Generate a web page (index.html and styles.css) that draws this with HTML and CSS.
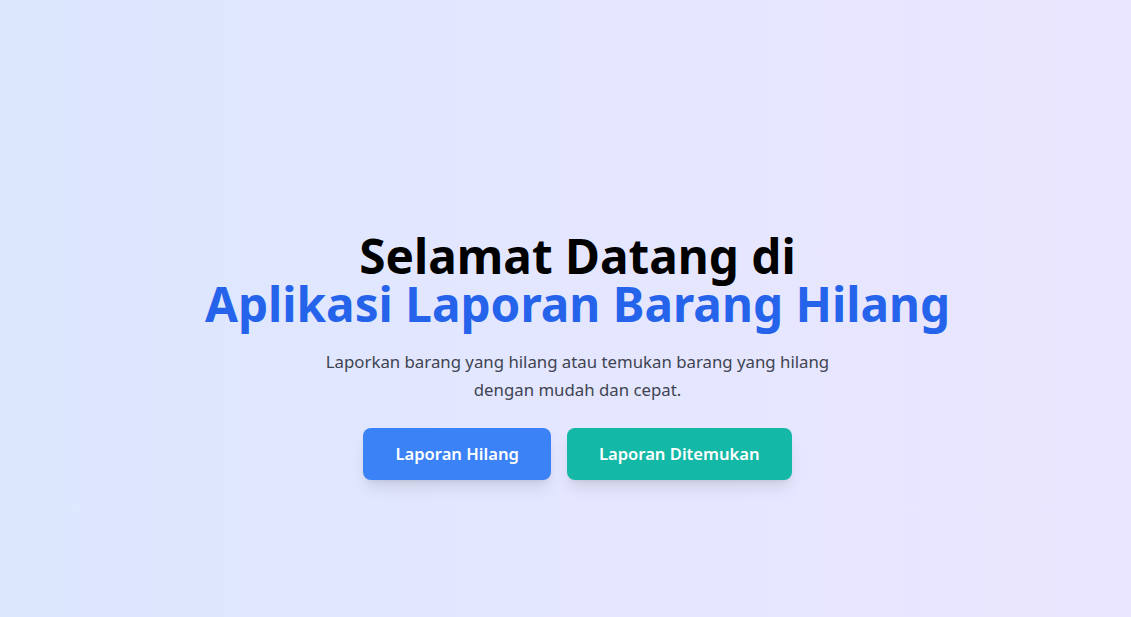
FILE: index.html
```html
<!DOCTYPE html>
<html lang="id">
<head>
<meta charset="utf-8">
<title>Aplikasi Laporan Barang Hilang</title>
<link rel="stylesheet" href="styles.css">
</head>
<body>
<main class="page">
  <section class="hero">
    <h1 class="title">Selamat Datang di<br><span class="accent">Aplikasi Laporan Barang Hilang</span></h1>
    <p class="lead">Laporkan barang yang hilang atau temukan barang yang hilang dengan mudah dan cepat.</p>
    <div class="actions">
      <a class="btn btn-blue" href="#">Laporan Hilang</a>
      <a class="btn btn-teal" href="#">Laporan Ditemukan</a>
    </div>
  </section>
</main>
</body>
</html>
```
FILE: styles.css
```css
* { box-sizing: border-box; }
html, body { margin: 0; padding: 0; height: 100%; }
body {
  font-family: "Noto Sans", "Open Sans", sans-serif;
  background: linear-gradient(to right, #dce7fe, #ebe6ff);
  overflow: hidden;
}
.page {
  min-height: 100%;
  display: flex;
  justify-content: center;
  padding-left: 24px;
  padding-top: 232px;
}
.hero {
  display: flex;
  flex-direction: column;
  align-items: center;
  text-align: center;
}
.title {
  margin: 0 0 20px;
  font-size: 47.7px;
  line-height: 48px;
  font-weight: 700;
  color: #000;
}
.accent { color: #2563eb; }
.lead {
  margin: 0 0 24px;
  max-width: 512px;
  font-size: 16.8px;
  line-height: 28px;
  color: #3f4452;
}
.actions {
  display: flex;
  gap: 16px;
}
.btn {
  display: block;
  padding: 12px 32px;
  font-size: 16.6px;
  line-height: 28px;
  font-weight: 600;
  color: #fff;
  text-decoration: none;
  border-radius: 8px;
  box-shadow: 0 10px 15px -3px rgba(0,0,0,0.1), 0 4px 6px -4px rgba(0,0,0,0.1);
}
.btn-blue { background: #3b82f6; }
.btn-teal { background: #14b8a6; }
```
